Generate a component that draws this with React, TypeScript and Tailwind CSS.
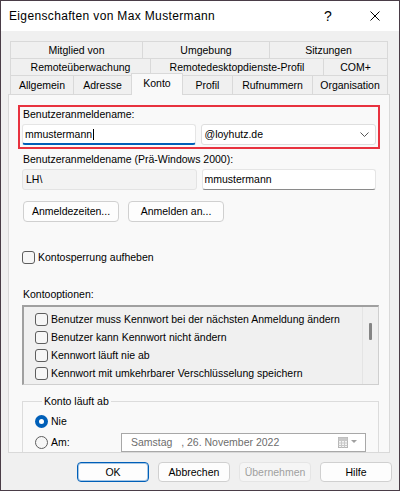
import React from "react";

const F = "font-['Liberation_Sans',Arial,sans-serif]";

function Tab({ w, label, cls = "" }: { w: string; label: string; cls?: string }) {
  return (
    <div className={`${w} h-full flex items-center justify-center border-l border-t border-[#d9d9d9] bg-[#f0f0f0] ${cls}`}>
      {label}
    </div>
  );
}

function Btn({ w, label, cls = "" }: { w: string; label: string; cls?: string }) {
  return (
    <div className={`${w} h-[21px] flex items-center justify-center rounded-[4px] border border-[#d0d0d0] bg-[#fdfdfd] ${cls}`}>
      {label}
    </div>
  );
}

function Check() {
  return <div className="w-[13px] h-[13px] rounded-[3px] border border-[#5d5d5d] bg-[#f6f6f6] shrink-0" />;
}

export default function App() {
  return (
    <div className={`${F} w-[400px] h-[491px] border border-[#4a3d47] bg-[#f0f0f0] text-black text-[10.5px] leading-[13px] flex flex-col overflow-hidden`}>
      {/* Title bar */}
      <div className="h-[30px] bg-white flex items-center shrink-0">
        <div className="pl-[8px] text-[12px] tracking-[0.35px] flex-1">Eigenschaften von Max Mustermann</div>
        <div className="w-[14px] text-[14px] leading-[14px] mr-[35px] text-center">?</div>
        <svg width="10" height="10" viewBox="0 0 10 10" className="mr-[19px]">
          <path d="M0.5 0.5 L9.5 9.5 M9.5 0.5 L0.5 9.5" stroke="#000" strokeWidth="1" />
        </svg>
      </div>

      <div className="pl-[7px] pr-[9px] pt-[10px] flex flex-col">
        {/* Tabs */}
        <div className="ml-[2px] w-[378px] flex flex-col">
          <div className="h-[17px] flex">
            <Tab w="w-[132px]" label="Mitglied von" />
            <Tab w="w-[127px]" label="Umgebung" />
            <Tab w="w-[119px]" label="Sitzungen" cls="border-r" />
          </div>
          <div className="h-[17px] flex">
            <Tab w="w-[140px]" label="Remoteüberwachung" />
            <Tab w="w-[173px]" label="Remotedesktopdienste-Profil" />
            <Tab w="w-[65px]" label="COM+" cls="border-r" />
          </div>
          <div className="h-[19px] flex items-start">
            <Tab w="w-[63px]" label="Allgemein" />
            <Tab w="w-[58px]" label="Adresse" />
            <div className="w-[52px] h-[22px] mt-[-2px] mb-[-1px] relative z-10 flex items-start pt-[3px] justify-center border-l border-t border-r border-[#d9d9d9] bg-[#f9f9f9]">
              Konto
            </div>
            <Tab w="w-[49px]" label="Profil" cls="border-l-0" />
            <Tab w="w-[80px]" label="Rufnummern" />
            <Tab w="w-[76px]" label="Organisation" cls="border-r" />
          </div>
        </div>

        {/* Panel */}
        <div className="w-[382px] h-[359px] border border-[#d9d9d9] bg-[#f9f9f9] overflow-hidden">
          <div className="px-[13px] flex flex-col">
            {/* red annotated box */}
            <div className="mt-[10px] -mx-[4px] border-2 border-[#e8323f] px-[2px] pt-[1px] pb-[2px]">
              <div className="h-[14px] pl-[1px]">Benutzeranmeldename:</div>
              <div className="mt-[2px] flex gap-[5px]">
                <div className="w-[176px] h-[21px] rounded-[3px] border border-[#e5e5e5] border-b-2 border-b-[#005fb8] bg-white flex items-center pl-[2px] pt-[1px]">
                  <span>mmustermann</span>
                  <span className="w-[1px] h-[11px] bg-black ml-[1px]" />
                </div>
                <div className="w-[176px] h-[21px] rounded-[3px] border border-[#dedede] bg-white flex items-center pl-[2px] pr-[6px]">
                  <span className="flex-1">@loyhutz.de</span>
                  <svg width="9" height="5" viewBox="0 0 9 5">
                    <path d="M0.5 0.5 L4.5 4.5 L8.5 0.5" fill="none" stroke="#555" strokeWidth="1" />
                  </svg>
                </div>
              </div>
            </div>

            <div className="mt-[4px] h-[14px] pl-[1px]">Benutzeranmeldename (Prä-Windows 2000):</div>
            <div className="mt-[2px] flex gap-[5px]">
              <div className="w-[176px] h-[21px] rounded-[3px] border border-[#e3e3e3] bg-[#f3f3f3] flex items-center pl-[3px]">LH\</div>
              <div className="w-[176px] h-[21px] rounded-[3px] border border-[#e5e5e5] border-b-[#8a8a8a] bg-white flex items-center pl-[2px]">mmustermann</div>
            </div>

            <div className="mt-[11px] ml-[1px] flex gap-[9px]">
              <Btn w="w-[96px]" label="Anmeldezeiten..." />
              <Btn w="w-[96px]" label="Anmelden an..." />
            </div>

            <div className="mt-[29px] flex items-center gap-[3px]">
              <Check />
              <span>Kontosperrung aufheben</span>
            </div>

            <div className="mt-[24px] h-[14px] pl-[1px]">Kontooptionen:</div>

            <div className="mt-[3px] w-[357px] h-[80px] border-t-2 border-l-2 border-t-[#a0a0a0] border-l-[#a0a0a0] border-r border-b border-r-[#cfcfcf] border-b-[#cfcfcf] bg-[#f0f0f0] flex">
              <div className="flex-1 pl-[11px] pt-[3px] flex flex-col">
                {[
                  "Benutzer muss Kennwort bei der nächsten Anmeldung ändern",
                  "Benutzer kann Kennwort nicht ändern",
                  "Kennwort läuft nie ab",
                  "Kennwort mit umkehrbarer Verschlüsselung speichern",
                ].map((t) => (
                  <div key={t} className="h-[18px] flex items-center gap-[3px]">
                    <Check />
                    <span>{t}</span>
                  </div>
                ))}
              </div>
              <div className="w-[16px] border-l border-[#e4e4e4] flex justify-center pt-[16px]">
                <div className="w-[3px] h-[17px] rounded-[1px] bg-[#858585] ml-[-1px]" />
              </div>
            </div>

            <fieldset className="mt-[10px] w-[357px] border border-[#dcdcdc] pl-[12px] pt-[7px] pb-[30px]">
              <legend className="ml-[7px] px-[2px] h-[13px]">Konto läuft ab</legend>
              <div className="h-[13px] flex items-center gap-[3px]">
                <div className="w-[13px] h-[13px] rounded-full bg-[#005fb8] flex items-center justify-center">
                  <div className="w-[5px] h-[5px] rounded-full bg-white" />
                </div>
                <span>Nie</span>
              </div>
              <div className="mt-[5px] h-[19px] flex items-center">
                <div className="w-[86px] flex items-center gap-[3px]">
                  <div className="w-[13px] h-[13px] rounded-full border border-[#5d5d5d] bg-[#f6f6f6]" />
                  <span>Am:</span>
                </div>
                <div className="w-[245px] h-[19px] border border-[#a8a8a8] bg-white flex items-center pl-[9px] pr-[7px] text-[#6d6d6d]">
                  <span className="flex-1 whitespace-pre">Samstag   , 26. November 2022</span>
                  <svg width="20" height="11" viewBox="0 0 20 11">
                    <rect x="0.5" y="0.5" width="9" height="10" fill="#f4f4f4" stroke="#b5b5b5" />
                    <path d="M0.5 3.5 H9.5 M0.5 6 H9.5 M0.5 8.5 H9.5 M3.5 3.5 V10.5 M6.5 3.5 V10.5" stroke="#c8c8c8" strokeWidth="1" />
                    <rect x="0.5" y="0.5" width="9" height="2.5" fill="#c9c9c9" />
                    <path d="M13 3 L19 3 L16 6 Z" fill="#a0a0a0" />
                  </svg>
                </div>
              </div>
            </fieldset>
          </div>
        </div>

        {/* bottom buttons */}
        <div className="mt-[9px] mr-[-2px] flex justify-end gap-[9px]">
          <div className="w-[72px] h-[20px] flex items-center justify-center rounded-[4px] border border-[#005fb8] shadow-[inset_0_0_0_1px_rgba(0,95,184,0.35)] bg-[#fdfdfd]">OK</div>
          <div className="w-[72px] h-[20px] flex items-center justify-center rounded-[4px] border border-[#d0d0d0] bg-[#fdfdfd]">Abbrechen</div>
          <div className="w-[72px] h-[20px] flex items-center justify-center rounded-[4px] border border-[#e5e5e5] bg-[#f5f5f5] text-[#a0a0a0]">Übernehmen</div>
          <div className="w-[72px] h-[20px] flex items-center justify-center rounded-[4px] border border-[#d0d0d0] bg-[#fdfdfd]">Hilfe</div>
        </div>
      </div>
    </div>
  );
}
